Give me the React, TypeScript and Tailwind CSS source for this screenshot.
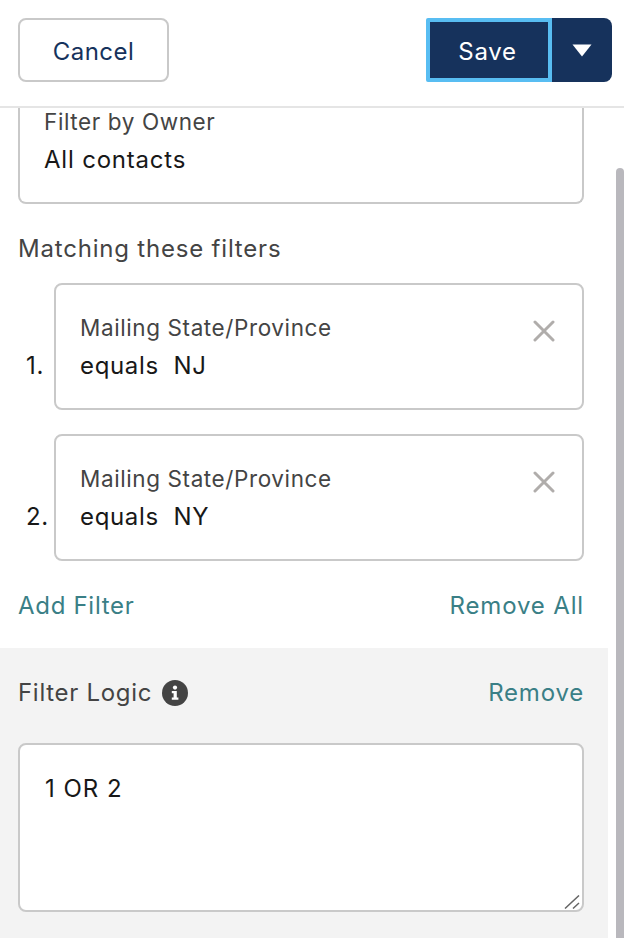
import React from "react";

function X() {
  return (
    <svg width="22" height="22" viewBox="0 0 22 22" className="shrink-0 text-[#b0adab]">
      <path d="M2 2 L20 20 M20 2 L2 20" stroke="currentColor" strokeWidth="3" strokeLinecap="round" />
    </svg>
  );
}

function FilterRow({ n, value }: { n: number; value: string }) {
  return (
    <div className="flex items-end">
      <div className="w-[36px] shrink-0 pl-[8px] pb-[29px] text-[24px] leading-[30px] tracking-[0.7px] text-[#181818]">{n}.</div>
      <div className="flex h-[127px] flex-1 items-start justify-between rounded-[8px] border-2 border-[#c9c9c9] bg-white pl-[24px] pr-[27px] pt-[28px]">
        <div>
          <div className="text-[22.5px] leading-[30px] tracking-[0.6px] text-[#444444]">Mailing State/Province</div>
          <div className="mt-[8px] text-[24px] leading-[30px] tracking-[0.65px] text-[#181818] whitespace-pre">equals  {value}</div>
        </div>
        <div className="pt-[7px]"><X /></div>
      </div>
    </div>
  );
}

export default function App() {
  return (
    <div className="relative h-[938px] w-[624px] overflow-hidden bg-white font-['Inter',sans-serif]">
      <header className="flex h-[108px] items-start justify-between border-b-2 border-[#e5e5e5] pl-[18px] pr-[12px] pt-[18px]">
        <button className="h-[64px] w-[151px] rounded-[8px] border-2 border-[#c9c9c9] bg-white pt-[3px] text-[24px] tracking-[0.5px] text-[#16325c]">Cancel</button>
        <div className="flex h-[64px]">
          <button className="h-[64px] w-[126px] rounded-l-[2px] border-4 border-[#58bdf2] bg-[#16325c] pt-[3px] pr-[3px] text-[24px] tracking-[0.7px] text-white">Save</button>
          <button className="flex h-[64px] w-[60px] items-center justify-center rounded-r-[8px] bg-[#16325c]">
            <svg width="20" height="13" viewBox="0 0 20 13">
              <path d="M0.5 0.5 H19.5 L10 12.5 Z" fill="#ffffff" />
            </svg>
          </button>
        </div>
      </header>

      <div className="w-[608px]">
        <div className="px-[18px] pr-[24px]">
          <div className="h-[96px] rounded-b-[8px] border-2 border-t-0 border-[#c9c9c9] pl-[24px]">
            <div className="text-[22.5px] leading-[28px] tracking-[0.6px] text-[#444444]">Filter by Owner</div>
            <div className="mt-[9px] text-[24px] leading-[30px] tracking-[0.8px] text-[#181818]">All contacts</div>
          </div>
          <div className="mt-[30px] text-[24px] leading-[30px] tracking-[0.8px] text-[#444444]">Matching these filters</div>
          <div className="mt-[19px] flex flex-col gap-[24px]">
            <FilterRow n={1} value="NJ" />
            <FilterRow n={2} value="NY" />
          </div>
          <div className="mt-[29px] flex justify-between text-[24px] leading-[32px] tracking-[0.85px] text-[#3a7f86]">
            <span className="tracking-[0.7px]">Add Filter</span>
            <span>Remove All</span>
          </div>
        </div>

        <section className="mt-[26px] h-[290px] bg-[#f3f3f3] pl-[18px] pr-[24px] pt-[29px]">
          <div className="flex items-center justify-between">
            <div className="flex items-center gap-[10px] text-[24px] leading-[32px] tracking-[0.7px] text-[#444444]">
              <span>Filter Logic</span>
              <svg width="26" height="26" viewBox="0 0 26 26">
                <circle cx="13" cy="13" r="13" fill="#444444" />
                <circle cx="13" cy="7.6" r="2.1" fill="#ffffff" />
                <path d="M9.8 11 H14.8 V17.6 H16.4 V19.8 H9.8 V17.6 H11.6 V13.2 H9.8 Z" fill="#ffffff" />
              </svg>
            </div>
            <span className="text-[24px] leading-[32px] tracking-[0.8px] text-[#3a7f86]">Remove</span>
          </div>
          <div className="relative mt-[34px] h-[169px] rounded-[8px] border-2 border-[#c9c9c9] bg-white pl-[25px] pt-[28px] text-[24px] leading-[32px] tracking-[1px] text-[#181818]">
            1 OR 2
            <svg width="16" height="14" viewBox="0 0 16 14" className="absolute bottom-[1px] right-[2px]">
              <path d="M1 13.5 L15 0.5 M9 13.5 L15 8" stroke="#666666" strokeWidth="1.5" />
            </svg>
          </div>
        </section>
      </div>

      <div className="absolute right-0 top-[168px] h-[770px] w-[8px] rounded-t-[4px] bg-[#b9b8bd]" />
    </div>
  );
}
